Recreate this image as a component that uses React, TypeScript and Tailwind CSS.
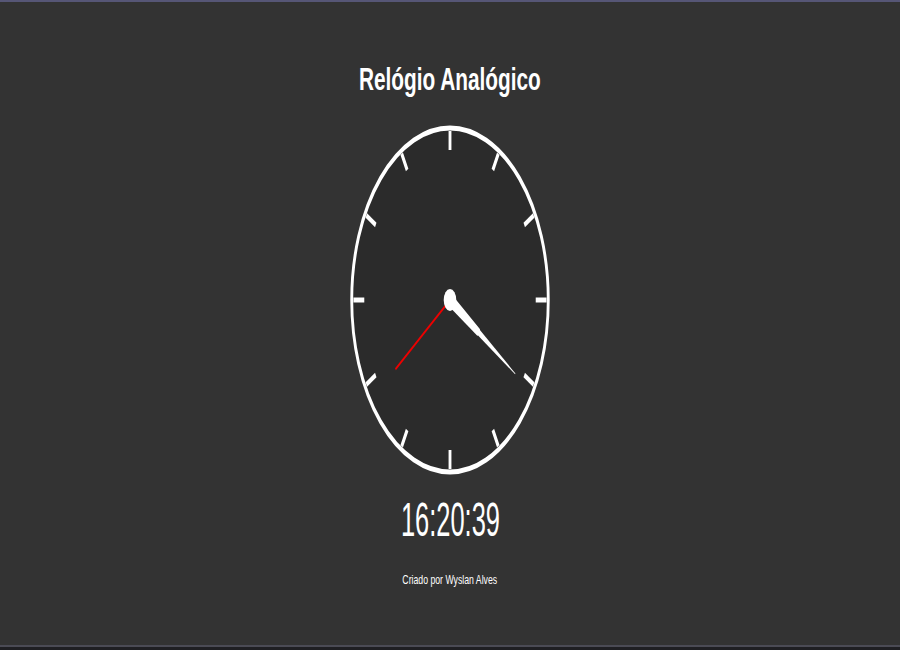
import React from 'react';

const ticks = Array.from({ length: 12 }, (_, i) => i * 30);

function Hand({ angle, length, base, tip, color }: { angle: number; length: number; base: number; tip: number; color: string }) {
  const c = 175;
  const pts = `${c - base / 2},${c + 6} ${c + base / 2},${c + 6} ${c + tip / 2},${c - length} ${c - tip / 2},${c - length}`;
  return <polygon points={pts} fill={color} transform={`rotate(${angle} ${c} ${c})`} />;
}

function Clock() {
  const m = 20, s = 39;
  const minAngle = (m + s / 60) * 6;
  const secAngle = s * 6;
  return (
    <svg width="200" height="350" viewBox="0 0 350 350" preserveAspectRatio="none" className="block">
      <circle cx="175" cy="175" r="172" fill="#2b2b2b" stroke="#ffffff" strokeWidth="5" />
      {ticks.map((a) => (
        <line
          key={a}
          x1="175"
          y1="6"
          x2="175"
          y2="25"
          stroke="#ffffff"
          strokeWidth="5"
          transform={`rotate(${a} 175 175)`}
        />
      ))}
      {/* hour + minute hands overlap at 16:20 */}
      <Hand angle={minAngle - 1} length={60} base={13} tip={8} color="#ffffff" />
      <Hand angle={minAngle - 1} length={136} base={11} tip={1} color="#ffffff" />
      <Hand angle={secAngle} length={118} base={2.5} tip={2.5} color="#ee0000" />
      <circle cx="175" cy="175" r="11" fill="#ffffff" />
    </svg>
  );
}

export default function App() {
  return (
    <div className="w-[900px] h-[650px] flex flex-col bg-[#1f1f23] font-['Liberation_Sans',Arial,sans-serif]">
      <main className="h-[645px] bg-[#333333] border-t-2 border-[#565676] flex flex-col items-center pt-[59px]">
        <h1 className="text-[32px] leading-[36px] font-bold text-white scale-x-[0.65] whitespace-nowrap">
          Relógio Analógico
        </h1>
        <div className="mt-[28px]">
          <Clock />
        </div>
        <div className="mt-[17px] text-[48px] leading-[56px] text-white scale-x-[0.53] whitespace-nowrap">
          16:20:39
        </div>
        <p className="mt-[24px] text-[13px] leading-[16px] text-white scale-x-[0.67] whitespace-nowrap">
          Criado por Wyslan Alves
        </p>
      </main>
      <div className="h-[2px] bg-[#4b4b55]" />
    </div>
  );
}
